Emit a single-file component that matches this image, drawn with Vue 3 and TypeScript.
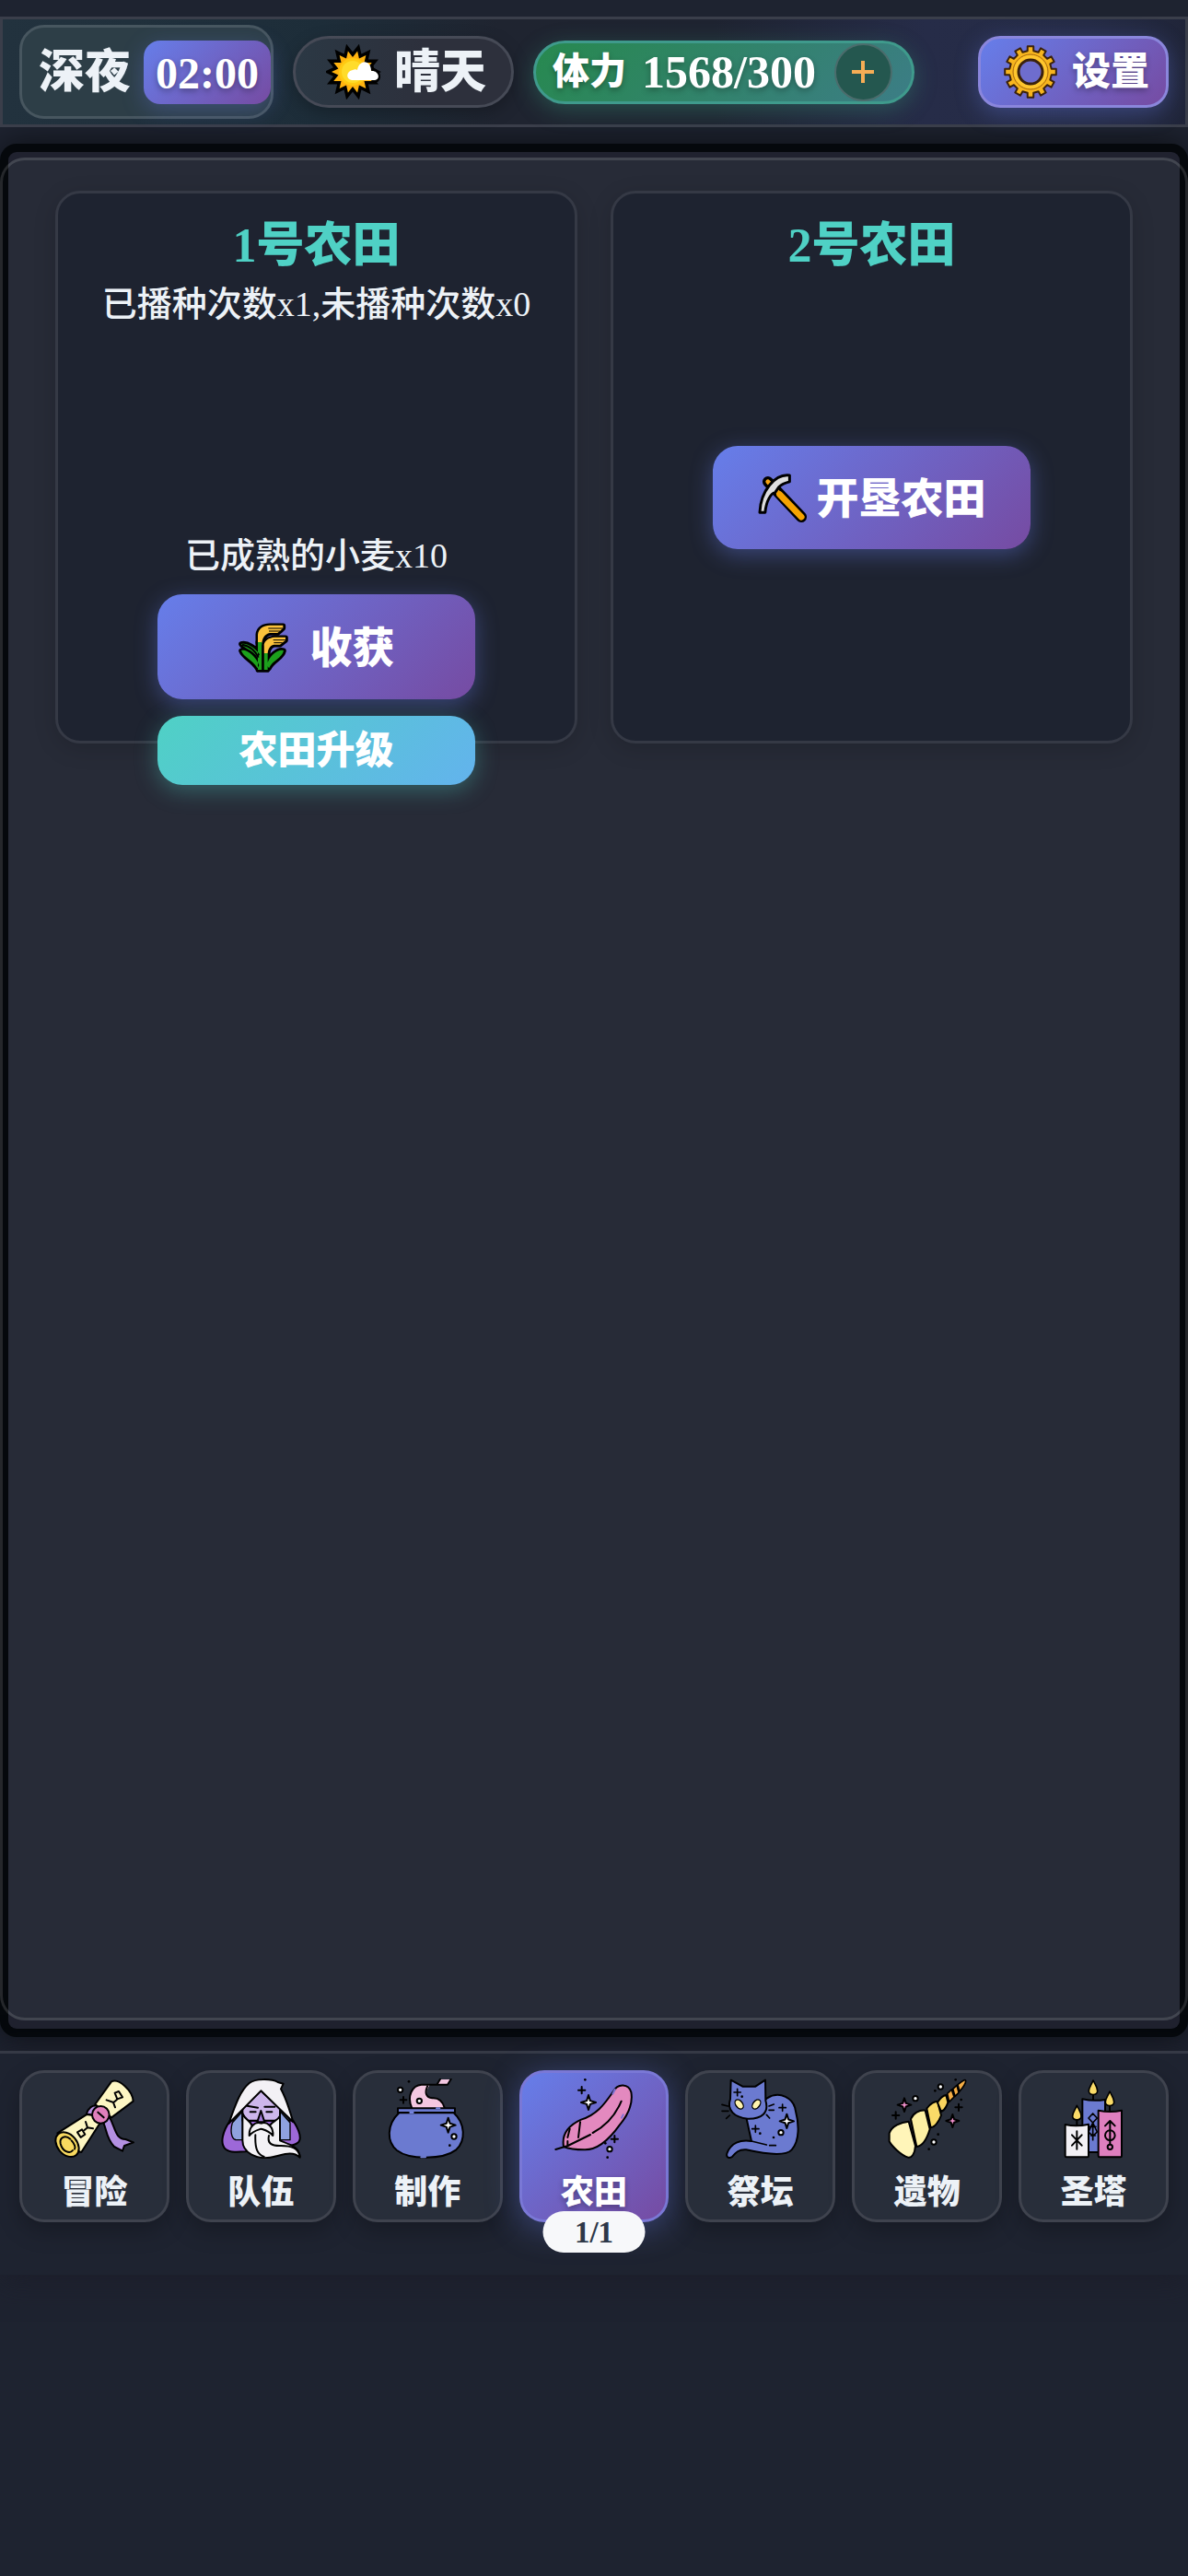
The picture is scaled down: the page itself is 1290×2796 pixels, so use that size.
<script setup lang="ts">
import { ref } from 'vue'

interface NavItem {
  id: string
  label: string
}

const navItems: NavItem[] = [
  { id: 'adventure', label: '冒险' },
  { id: 'team', label: '队伍' },
  { id: 'craft', label: '制作' },
  { id: 'farm', label: '农田' },
  { id: 'altar', label: '祭坛' },
  { id: 'relic', label: '遗物' },
  { id: 'tower', label: '圣塔' },
]
const active = ref('farm')

/** Four-pointed sparkle centred on cx, cy. */
function sparkle(cx: number, cy: number, r: number): string {
  const k = r * 0.24
  return `M${cx} ${cy - r}L${cx + k} ${cy - k}L${cx + r} ${cy}L${cx + k} ${cy + k}L${cx} ${cy + r}L${cx - k} ${cy + k}L${cx - r} ${cy}L${cx - k} ${cy - k}Z`
}

function plus(cx: number, cy: number, r: number): string {
  return `M${cx - r} ${cy}H${cx + r}M${cx} ${cy - r}V${cy + r}`
}

function flame(cx: number, cy: number): string {
  return `M${cx} ${cy - 24}C${cx + 8} ${cy - 8} ${cx + 15} ${cy} ${cx + 14} ${cy + 12}C${cx + 12} ${cy + 26} ${cx - 12} ${cy + 26} ${cx - 14} ${cy + 12}C${cx - 15} ${cy} ${cx - 6} ${cy - 8} ${cx} ${cy - 24}Z`
}

function polar(r: number, a: number): string {
  return `${(r * Math.sin(a)).toFixed(2)},${(-r * Math.cos(a)).toFixed(2)}`
}

function sunPoints(count: number, outer: number, inner: number): string {
  return Array.from({ length: count * 2 }, (_, i) =>
    polar(i % 2 ? inner : outer, ((i + 1) * Math.PI) / count),
  ).join(' ')
}

function gearPoints(teeth: number, outer: number, inner: number): string {
  const step = (Math.PI * 2) / teeth
  return Array.from({ length: teeth }, (_, i) => {
    const a = i * step
    return [
      polar(inner, a - step * 0.27),
      polar(outer, a - step * 0.22),
      polar(outer, a + step * 0.22),
      polar(inner, a + step * 0.27),
    ].join(' ')
  }).join(' ')
}
</script>

<template>
  <div class="app">
    <header class="topbar">
      <div class="time-box">
        <span class="period">深夜</span>
        <span class="clock">02:00</span>
      </div>
      <div class="weather">
        <svg class="icon-sm" viewBox="-29 -30 60 60" aria-hidden="true">
          <g fill="#000" stroke="#000" stroke-width="7">
            <polygon :points="sunPoints(14, 23, 16)" />
            <path d="M-1 9C-7 8-7-1 0-2C2-3 4-3 5-2C6-9 13-12 18-7C20-5 20-2 20-1C27-1 29 8 23 9Z" />
          </g>
          <polygon :points="sunPoints(14, 23, 16)" fill="#ffb30f" />
          <circle r="15" fill="#ffca12" />
          <circle r="12" fill="#ffdc2b" />
          <path d="M-1 9C-8 8-7-1 0-2C2-3 4-3 5-2C6-9 13-14 18-8C20-5 20-2 20-1C28-2 31 8 24 9Z" fill="#fff" />
        </svg>
        <span>晴天</span>
      </div>
      <div class="stamina">
        <span class="stamina-label">体力</span>
        <span class="stamina-value">1568/300</span>
        <button class="add" type="button" aria-label="增加体力">
          <svg viewBox="0 0 24 24" aria-hidden="true"><path d="M12 0V24M0 12H24" stroke="#f6ad55" stroke-width="4" /></svg>
        </button>
      </div>
      <button class="settings" type="button">
        <svg class="icon-sm" viewBox="-30 -30 60 60" aria-hidden="true">
          <polygon :points="gearPoints(12, 28, 23)" fill="#f7b51e" stroke="#3b220c" stroke-width="2" stroke-linejoin="round" />
          <circle r="19" fill="none" stroke="#a66a10" stroke-width="1" />
          <circle r="16" fill="none" stroke="#ffc62e" stroke-width="4" />
          <circle r="13" fill="#6e6dce" stroke="#3b220c" stroke-width="3" />
        </svg>
        <span>设置</span>
      </button>
    </header>

    <main class="frame">
      <div class="panel">
        <section class="card">
          <h2>1号农田</h2>
          <p class="note">已播种次数x1,未播种次数x0</p>
          <div class="harvest">
            <p class="note">已成熟的小麦x10</p>
            <button class="action" type="button">
              <svg class="icon-act" viewBox="363 347 165 165" aria-hidden="true">
                <g stroke="#000" stroke-width="17" stroke-linejoin="round" fill="#000">
                  <path d="M427 412V385C429 365 445 357 465 357H508V364L500 372L490 380H465C448 384 442 395 438 412Z" />
                  <path d="M447 446V419C449 404 462 399 480 396H516V404L508 410L498 418H478C464 422 460 432 458 446Z" />
                  <path d="M432 450C420 430 390 410 372 416C380 430 410 435 425 460ZM430 485C420 455 385 430 372 438C380 460 405 465 425 495ZM456 485C460 455 495 430 510 438C505 462 475 468 462 495ZM427 410H438V500H427ZM447 446H457V500H447Z" />
                </g>
                <path d="M426 412V385C428 365 445 355 465 355H508V364L500 372L490 380H465C448 384 442 395 439 412ZM446 446V419C448 404 462 396 480 394H516V404L508 410L498 418H478C464 422 460 432 458 446Z" fill="#fcc23c" />
                <path d="M460 365H508M462 374H498M476 403H516M478 412H506" stroke="#000" stroke-width="3" />
                <path d="M432 450C420 430 390 410 372 416C380 430 410 435 425 460ZM430 485C420 455 385 430 372 438C380 460 405 465 425 495ZM456 485C460 455 495 430 510 438C505 462 475 468 462 495ZM426 410H439V500H426ZM446 446H458V500H446Z" fill="#1ca01c" />
                <path d="M375 418C400 422 420 440 428 460M442 420V500" fill="none" stroke="#000" stroke-width="6" />
              </svg>
              <span class="spaced">收获</span>
            </button>
            <button class="action upgrade" type="button">农田升级</button>
          </div>
        </section>

        <section class="card">
          <h2>2号农田</h2>
          <div class="reclaim">
            <button class="action" type="button">
              <svg class="icon-act" viewBox="0 0 56 56" aria-hidden="true">
                <path d="M11 9L15 13L48 48" fill="none" stroke="#000" stroke-width="12" stroke-linecap="round" />
                <path d="M11 9L28 27" fill="none" stroke="#f6a312" stroke-width="5" stroke-linecap="round" />
                <path d="M24 23L48 48" fill="none" stroke="#f5a300" stroke-width="7" stroke-linecap="round" />
                <path d="M35 2C19 0 3 19 2 43H8C9 30 15 21 19 21L23 15C27 11 31 10 35 9Z" fill="#dedede" stroke="#000" stroke-width="3" stroke-linejoin="round" />
              </svg>
              <span>开垦农田</span>
            </button>
          </div>
        </section>
      </div>
    </main>

    <nav class="tabs">
      <button
        v-for="item in navItems"
        :key="item.id"
        type="button"
        class="tab"
        :class="{ active: item.id === active }"
        @click="active = item.id"
      >
        <svg v-if="item.id === 'adventure'" class="icon" viewBox="180 288 261 261" aria-hidden="true">
          <path d="M335 425C350 440 345 480 375 510L402 524L408 507L438 496L412 486C378 485 380 450 360 415Z" fill="#b490e2" />
          <path d="M285 403C290 385 305 372 320 378L318 410Z" fill="#b490e2" />
          <path d="M313 372L366 298C390 286 435 328 437 362L366 415Z" fill="#fdf6c3" />
          <path d="M190 466L284 406C306 402 322 420 328 434L268 528L240 520Z" fill="#fdf6c3" />
          <ellipse cx="222" cy="503" rx="32" ry="45" transform="rotate(-40 222 503)" fill="#f8d95f" />
          <path d="M232 485C215 470 196 480 200 500C206 525 230 535 240 522M236 490C246 500 250 514 246 518" fill="none" />
          <circle cx="331" cy="406" r="28" fill="#e07fbd" />
          <path d="M322 398L341 415" />
          <path d="M377 335L390 330L402 349L385 355ZM350 358L373 366L387 354M372 366L378 382" fill="none" />
          <path d="M255 463L270 454L280 470L266 480ZM278 456L288 448L282 429M288 448L306 451" fill="none" />
        </svg>

        <svg v-else-if="item.id === 'team'" class="icon" viewBox="720 288 261 261" aria-hidden="true">
          <path d="M750 425C725 460 715 500 735 518C750 530 775 528 800 526L920 505C955 510 975 500 977 485C980 460 960 435 955 425Z" fill="#9d68d8" />
          <path d="M757 432L790 395V488H768C752 483 750 455 757 432ZM912 395L945 432V488H912Z" fill="#8fa2de" stroke-width="4" />
          <path d="M790 385L850 328L912 385V425H790Z" fill="#cdb6ec" />
          <path d="M790 402C800 424 816 426 820 440L880 440C890 425 905 425 912 410V490C950 505 976 512 977 545C950 520 915 540 880 545C835 552 790 530 790 490Z" fill="#f3f1f5" />
          <path d="M745 435C765 380 780 330 812 303C830 288 885 288 905 300L923 305L915 322C930 350 945 395 955 430L850 328Z" fill="#f3f1f5" />
          <path d="M850 393L838 430H862Z" fill="#a57ddb" />
          <path d="M851 434C832 426 810 445 812 474C828 456 840 456 851 452C865 456 876 458 889 474C892 445 868 426 851 434Z" fill="#f3f1f5" />
          <path d="M815 397H833M868 397H886M805 377L840 383M862 380H895M876 474C870 500 885 508 915 507C950 507 972 515 977 542M832 472C830 520 840 535 860 543" fill="none" />
        </svg>

        <svg v-else-if="item.id === 'craft'" class="icon" viewBox="155 138 261 261" aria-hidden="true">
          <path d="M232 235C216 195 235 160 265 158H315L325 141H360L350 158H292C275 185 280 200 300 202C325 200 338 220 342 235Z" fill="#f4c7e1" stroke="none" />
          <path d="M234 235C216 195 235 160 265 158H350L361 140M315 158L326 140M284 164C275 185 280 200 300 202C325 200 336 220 340 233" fill="none" />
          <path d="M192 250C150 290 152 345 185 372C225 403 335 403 378 370C410 340 408 285 370 250Z" fill="#6b7ad0" />
          <path d="M188 235H374V249H188Z" fill="#6b7ad0" />
          <path d="M228 249H238M314 235H324M264 394H278" stroke="#7585dd" />
          <path :d="sparkle(352, 290, 24)" fill="#fff" />
          <path :d="plus(206, 208, 10)" />
          <g fill="#fff"><circle cx="196" cy="175" r="8" /><circle cx="258" cy="211" r="8" /><circle cx="371" cy="327" r="8" /></g>
          <g fill="#000" stroke="none"><circle cx="224" cy="148" r="4" /><circle cx="357" cy="356" r="4" /></g>
        </svg>

        <svg v-else-if="item.id === 'farm'" class="icon" viewBox="695 138 261 261" aria-hidden="true">
          <path d="M728 360C722 325 735 295 785 272C840 255 865 215 890 180C905 152 940 155 948 182C955 220 935 260 910 290C885 325 845 372 795 370C770 370 748 368 728 360Z" fill="#e389bf" />
          <path d="M702 369L742 357L815 321M823 315C870 290 898 255 916 212M776 330L782 280M741 330L748 302M741 342V354" fill="none" />
          <path d="M888 188L895 174M917 266L922 256" stroke="#7d72d4" />
          <path :d="sparkle(809, 216, 24)" fill="#fff" />
          <path :d="plus(787, 176, 11) + plus(894, 335, 11)" />
          <circle cx="878" cy="368" r="8" fill="#fff" />
          <g fill="#000" stroke="none"><circle cx="798" cy="142" r="4" /><circle cx="864" cy="349" r="4" /><circle cx="871" cy="395" r="4" /></g>
        </svg>

        <svg v-else-if="item.id === 'altar'" class="icon" viewBox="155 138 261 261" aria-hidden="true">
          <path d="M308 202C350 175 395 205 400 240C412 285 415 340 388 370C370 390 320 388 240 370C215 368 205 380 195 392C185 400 172 395 178 380C190 350 220 335 257 342L240 265Z" fill="#6b7ad0" />
          <path d="M190 143L228 164H270L302 143L303 210C315 250 290 270 245 269C200 265 176 240 188 205Z" fill="#6b7ad0" />
          <path d="M257 342L306 354M316 356H336M161 223L180 228M161 244H182M175 268L186 258M314 228L330 222M314 241H330M306 256L316 267" fill="none" stroke-width="5" />
          <g fill="#fff4ae" stroke-width="4"><ellipse cx="217" cy="222" rx="11" ry="17" transform="rotate(-38 217 222)" /><ellipse cx="273" cy="222" rx="11" ry="17" transform="rotate(38 273 222)" /></g>
          <path :d="sparkle(372, 277, 23)" fill="#fff" />
          <path :d="plus(211, 183, 11) + plus(358, 233, 11) + plus(270, 302, 11)" stroke-width="5" />
          <circle cx="353" cy="314" r="8" fill="#fff" />
          <g fill="#000" stroke="none"><circle cx="226" cy="197" r="4" /><circle cx="285" cy="317" r="4" /><circle cx="329" cy="330" r="4" /></g>
        </svg>

        <svg v-else-if="item.id === 'relic'" class="icon" viewBox="69 30 261 261" aria-hidden="true">
          <path d="M77 208C85 185 115 172 140 170L162 250C160 275 150 290 138 287C115 280 85 250 77 235Z" fill="#fff5b9" />
          <path d="M147 162C155 142 175 132 194 134L209 195C200 225 185 250 166 252Z" fill="#fdf0a3" />
          <path d="M199 128C210 112 225 103 234 105L246 150C236 175 222 188 212 190Z" fill="#fadb68" />
          <path d="M234 108C245 90 255 85 262 84L268 108C262 125 252 136 246 138Z" fill="#f9d45e" />
          <path d="M266 79L280 66L288 90L272 106ZM284 64L297 52L303 76L291 88ZM300 50C312 40 325 30 326 38C326 46 316 60 306 72Z" fill="#f4ad45" stroke-width="5" />
          <path :d="sparkle(126, 116, 22) + sparkle(283, 168, 21)" fill="#ef8fcb" />
          <path :d="plus(98, 150, 11) + plus(303, 124, 11)" />
          <g fill="#fff"><circle cx="162" cy="95" r="8" /><circle cx="244" cy="57" r="8" /><circle cx="222" cy="237" r="8" /></g>
          <g fill="#000" stroke="none"><circle cx="226" cy="70" r="4" /><circle cx="293" cy="34" r="4" /><circle cx="311" cy="99" r="4" /><circle cx="236" cy="212" r="4" /><circle cx="206" cy="260" r="4" /></g>
        </svg>

        <svg v-else class="icon" viewBox="460 288 261 261" aria-hidden="true">
          <path d="M554 355Q590 363 628 357V528H554Z" fill="#6b7ad0" />
          <path d="M588 402L602 417L588 432L574 417ZM588 432L602 462L588 476L574 462ZM588 432V488M578 445L598 445M582 474H596" fill="none" stroke-width="5" />
          <path d="M498 438Q535 446 574 437V540Q574 544 570 544H502Q498 544 498 540Z" fill="#f3f1f5" />
          <path d="M606 392Q645 400 682 392V540Q682 544 678 544H610Q606 544 606 540Z" fill="#df7fbf" />
          <path d="M536 460V518M520 472L552 506M552 472L520 506" />
          <path d="M644 518V426M628 442L644 426L660 442" fill="none" />
          <circle cx="644" cy="473" r="16" fill="none" /><circle cx="644" cy="511" r="8" fill="#df7fbf" />
          <path d="M589 335V356M643 372V394M536 418V440" />
          <path :d="flame(589, 318) + flame(643, 354) + flame(536, 400)" fill="#fadb68" stroke-width="5" />
        </svg>
        <span class="tab-label">{{ item.label }}</span>
        <span v-if="item.id === 'farm'" class="count">1/1</span>
      </button>
    </nav>
  </div>
</template>

<style>
body {
  margin: 0;
  background: #1e2330;
}
</style>

<style scoped>
.app {
  box-sizing: border-box;
  display: flex;
  flex-direction: column;
  min-height: 100vh;
  padding: 18px 0 327px;
  overflow: hidden;
  background: #1e2330;
  color: #edf2f7;
  font-family: "Liberation Serif", "Noto Sans CJK SC", serif;
}

.app * {
  box-sizing: border-box;
}

button {
  margin: 0;
  padding: 0;
  border: 0;
  color: #fff;
  font: inherit;
  cursor: pointer;
}

h2,
p {
  margin: 0;
}

.topbar {
  position: relative;
  z-index: 1;
  display: flex;
  align-items: center;
  gap: 21px;
  height: 120px;
  padding: 0 18px;
  border: 3px solid #3a3e4a;
  background: linear-gradient(90deg, #22323e 0%, #1d2d39 27%, #1f2430 42%, #1f2431 60%, #262c48 78%, #252b45 92%, #202539 100%);
  font-size: 50px;
  font-weight: 900;
  line-height: 60px;
  white-space: nowrap;
}

.time-box {
  display: flex;
  align-items: center;
  gap: 14px;
  height: 102px;
  padding-left: 18px;
  border: 3px solid #47565f;
  border-radius: 27px;
  background: #2d3e47;
}

.clock {
  height: 69px;
  padding: 0 13px;
  border-radius: 18px;
  background: linear-gradient(135deg, #667eea, #764ba2);
  box-shadow: 0 6px 24px rgba(102, 126, 234, 0.3);
  color: #fff;
  font-size: 48px;
  line-height: 72px;
  text-shadow: 0 3px 6px rgba(0, 0, 0, 0.3);
}

.weather {
  display: flex;
  align-items: center;
  gap: 14px;
  height: 78px;
  padding: 0 27px 0 33px;
  border: 3px solid #464a56;
  border-radius: 39px;
  background: linear-gradient(90deg, #2b3844, #2d303c 60%);
  box-shadow: 0 6px 18px rgba(0, 0, 0, 0.25);
}

.icon-sm {
  display: block;
  width: 60px;
  height: 60px;
}

.stamina {
  display: flex;
  align-items: center;
  height: 69px;
  padding: 0 21px 0 18px;
  border: 3px solid #3f9a8c;
  border-radius: 36px;
  background: linear-gradient(135deg, #27894f, #3c7d86);
  box-shadow: 0 6px 24px rgba(56, 161, 130, 0.35);
  color: #fff;
  text-shadow: 0 3px 6px rgba(0, 0, 0, 0.3);
}

.stamina-label {
  margin-right: 17px;
  font-size: 40px;
}

.stamina-value {
  margin-right: 20px;
}

.add {
  display: grid;
  place-items: center;
  width: 63px;
  height: 63px;
  border: 2px solid #4b6c6c;
  border-radius: 50%;
  background: #24574f;
}

.add svg {
  width: 24px;
  height: 24px;
}

.settings {
  display: flex;
  align-items: center;
  gap: 15px;
  height: 78px;
  margin-left: auto;
  padding: 0 18px 0 24px;
  border: 3px solid #8a86dc;
  border-radius: 24px;
  background: linear-gradient(135deg, #667eea, #764ba2);
  box-shadow: 0 6px 24px rgba(102, 126, 234, 0.35);
  font-size: 42px;
  font-weight: 900;
  text-shadow: 0 3px 6px rgba(0, 0, 0, 0.3);
}

.frame {
  display: flex;
  flex: 1;
  margin: 27px 9px 24px;
  border-radius: 9px;
  background: #20222f;
  box-shadow: 0 0 0 9px #05080c, 0 0 36px 9px rgba(0, 0, 0, 0.6);
}

.panel {
  display: grid;
  flex: 1;
  grid-template-columns: 1fr 1fr;
  align-content: start;
  gap: 36px;
  margin: 6px -9px 9px;
  padding: 33px 57px;
  border: 3px solid rgba(255, 255, 255, 0.13);
  border-radius: 27px;
  background: linear-gradient(90deg, transparent 6px, #272b37 6px, #272b37 calc(100% - 6px), transparent calc(100% - 6px));
}

.card {
  display: flex;
  flex-direction: column;
  align-items: center;
  height: 600px;
  padding: 27px 0 21px;
  border: 3px solid #353945;
  border-radius: 27px;
  background: #1e2330;
  box-shadow: 0 6px 24px rgba(0, 0, 0, 0.15);
}

h2 {
  color: #4fd1c5;
  font-size: 52px;
  font-weight: 900;
  line-height: 60px;
}

.note {
  font-size: 38px;
  font-weight: 500;
  line-height: 54px;
  white-space: nowrap;
}

h2 + .note {
  margin-top: 6px;
}

.harvest {
  display: flex;
  flex-direction: column;
  align-items: center;
  margin-top: 219px;
}

.reclaim {
  display: flex;
  flex: 1;
  align-items: center;
}

.action {
  display: flex;
  flex-shrink: 0;
  align-items: center;
  justify-content: center;
  gap: 9px;
  width: 345px;
  height: 112px;
  padding-top: 3px;
  border-radius: 27px;
  background: linear-gradient(135deg, #667eea, #764ba2);
  box-shadow: 0 6px 24px rgba(102, 126, 234, 0.4);
  font-size: 46px;
  font-weight: 900;
  line-height: 60px;
}

.harvest .action {
  margin-top: 15px;
  height: 114px;
}

.harvest .upgrade {
  margin-top: 18px;
  height: 75px;
  padding-top: 0;
  background: linear-gradient(135deg, #4fd1c5, #63b3ed);
  box-shadow: 0 6px 24px rgba(79, 209, 197, 0.35);
  font-size: 42px;
}

.spaced {
  padding-left: 14px;
}

.icon-act {
  width: 55px;
  height: 55px;
}

.tabs {
  position: relative;
  z-index: 1;
  display: grid;
  grid-template-columns: repeat(7, 1fr);
  align-items: start;
  gap: 18px;
  height: 243px;
  padding: 18px 21px 0;
  border-top: 3px solid #353945;
  background: #1e2330;
  box-shadow: 0 6px 30px rgba(28, 28, 40, 0.8);
}

.tab {
  position: relative;
  display: flex;
  flex-direction: column;
  align-items: center;
  height: 165px;
  padding-top: 6px;
  border: 3px solid #3f434e;
  border-radius: 27px;
  background: #282e3a;
  box-shadow: 0 9px 24px rgba(0, 0, 0, 0.25);
  color: #edf2f7;
}

.tab.active {
  border-color: #7a78d6;
  background: linear-gradient(135deg, #667eea, #764ba2);
  box-shadow: 0 6px 36px rgba(102, 126, 234, 0.4);
}

.icon {
  width: 87px;
  height: 87px;
  stroke: #000;
  stroke-width: 6;
  stroke-linecap: round;
  stroke-linejoin: round;
}

.tab-label {
  margin-top: 16px;
  font-size: 36px;
  font-weight: 900;
  line-height: 42px;
}

.tab.active .tab-label {
  color: #fff;
  text-shadow: 0 3px 6px rgba(0, 0, 0, 0.3);
}

.count {
  position: absolute;
  bottom: -36px;
  left: 50%;
  width: 111px;
  height: 45px;
  transform: translateX(-50%);
  border-radius: 23px;
  background: #f7f8fa;
  color: #2d3748;
  font-size: 33px;
  font-weight: 700;
  line-height: 46px;
}
</style>
